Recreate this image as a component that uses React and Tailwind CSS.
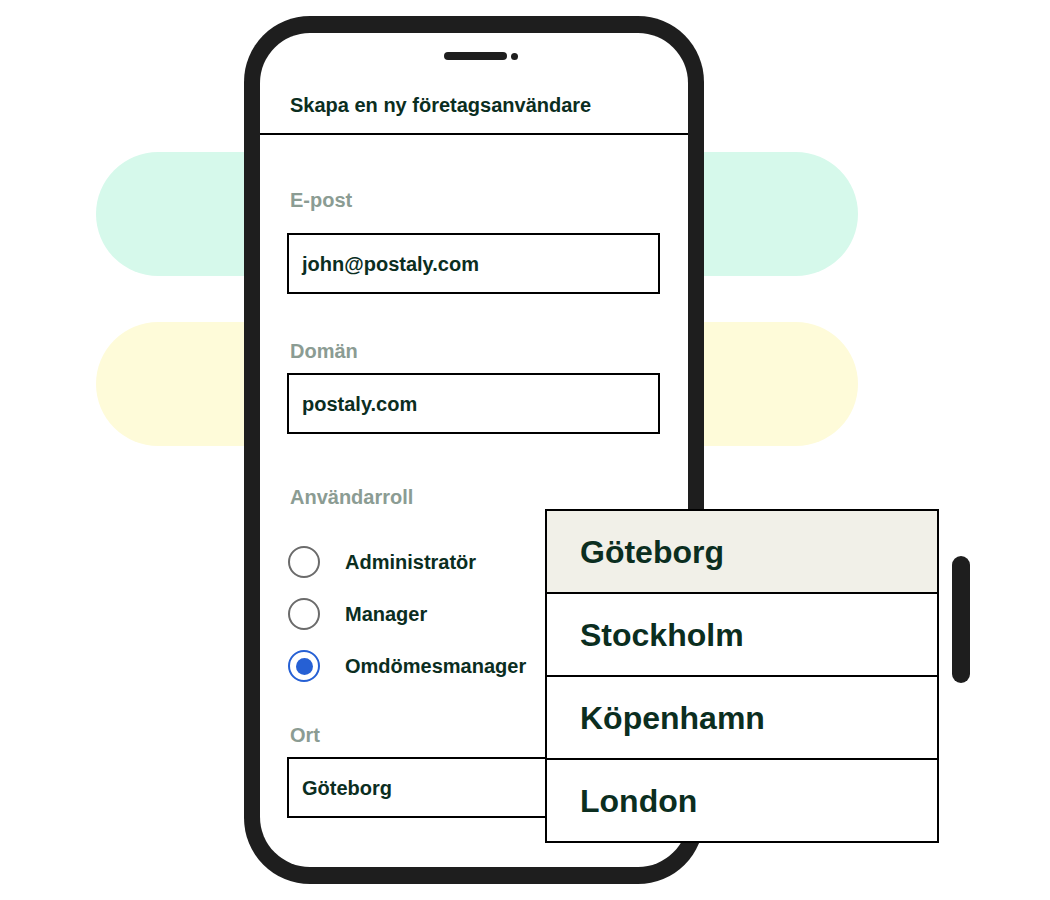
import { useState } from "react";

const roles = ["Administratör", "Manager", "Omdömesmanager"];
const cities = ["Göteborg", "Stockholm", "Köpenhamn", "London"];

const Field = ({ label, value, labelClass }) => (
  <>
    <div className={`ml-[3px] text-[20px] leading-6 font-bold text-[#8b9c93] ${labelClass}`}>
      {label}
    </div>
    <div
      className={`flex h-[61px] w-[373px] items-center border-2 border-black bg-white pl-[13px] text-[20px] leading-6 font-bold text-[#0b2e1f] ${
        label === "Domän" || label === "Ort" ? "mt-[10px]" : "mt-[21px]"
      }`}
    >
      {value}
    </div>
  </>
);

const Radio = ({ checked, label, onClick }) => (
  <button type="button" onClick={onClick} className="flex h-[32px] items-center gap-[25px] text-left">
    <span
      className={`flex h-[32px] w-[32px] items-center justify-center rounded-full border-2 ${
        checked ? "border-[#2660d4]" : "border-[#6b6b6b]"
      }`}
    >
      {checked && <span className="h-[17px] w-[17px] rounded-full bg-[#2660d4]" />}
    </span>
    <span className="text-[20px] leading-6 font-bold text-[#0b2e1f]">{label}</span>
  </button>
);

export default function App() {
  const [role, setRole] = useState("Omdömesmanager");
  const [city, setCity] = useState("Göteborg");

  return (
    <div className="relative h-[900px] w-[1050px] overflow-hidden bg-white font-['Liberation_Sans',Arial,sans-serif]">
      {/* background pills */}
      <div className="absolute left-[96px] top-[152px] h-[124px] w-[762px] rounded-full bg-[#d6f9eb]" />
      <div className="absolute left-[96px] top-[322px] h-[124px] w-[762px] rounded-full bg-[#fefbd9]" />

      {/* phone */}
      <div className="relative z-10 ml-[244px] mt-[16px] w-[460px] rounded-[66px] bg-[#1e1e1e] px-[16px] py-[17px]">
        <div className="h-[834px] overflow-hidden rounded-[50px] bg-white">
          <div className="border-b-2 border-black pb-[16px]">
            <div className="mt-[19px] flex items-center justify-center gap-[4px] pl-[13px]">
              <span className="h-[8px] w-[63px] rounded-full bg-[#1e1e1e]" />
              <span className="h-[7px] w-[7px] rounded-full bg-[#1e1e1e]" />
            </div>
            <h1 className="mt-[33px] pl-[30px] text-[20px] leading-6 font-bold text-[#0b2e1f]">
              Skapa en ny företagsanvändare
            </h1>
          </div>

          <div className="pl-[27px]">
            <div className="mt-[53px]">
              <Field label="E-post" value="john@postaly.com" />
            </div>
            <div className="mt-[45px]">
              <Field label="Domän" value="postaly.com" />
            </div>

            <div className="mt-[51px] ml-[3px] text-[20px] leading-6 font-bold text-[#8b9c93]">
              Användarroll
            </div>
            <div className="mt-[37px] flex flex-col gap-[20px] pl-[1px]">
              {roles.map((r) => (
                <Radio key={r} label={r} checked={role === r} onClick={() => setRole(r)} />
              ))}
            </div>

            <div className="mt-[41px]">
              <Field label="Ort" value={city} />
            </div>
          </div>
        </div>
      </div>

      {/* side button */}
      <div className="absolute left-[952px] top-[556px] h-[127px] w-[18px] rounded-full bg-[#1e1e1e]" />

      {/* city dropdown */}
      <div className="absolute left-[545px] top-[509px] z-20 w-[394px] border-2 border-black bg-white">
        {cities.map((c, i) => (
          <button
            key={c}
            type="button"
            onClick={() => setCity(c)}
            className={`flex w-full items-center pl-[33px] text-left text-[32px] font-bold text-[#0b2e1f] ${
              i > 0 ? "h-[83px] border-t-2 border-black" : "h-[81px]"
            } ${city === c ? "bg-[#f1f0e8]" : "bg-white"}`}
          >
            {c}
          </button>
        ))}
      </div>
    </div>
  );
}
